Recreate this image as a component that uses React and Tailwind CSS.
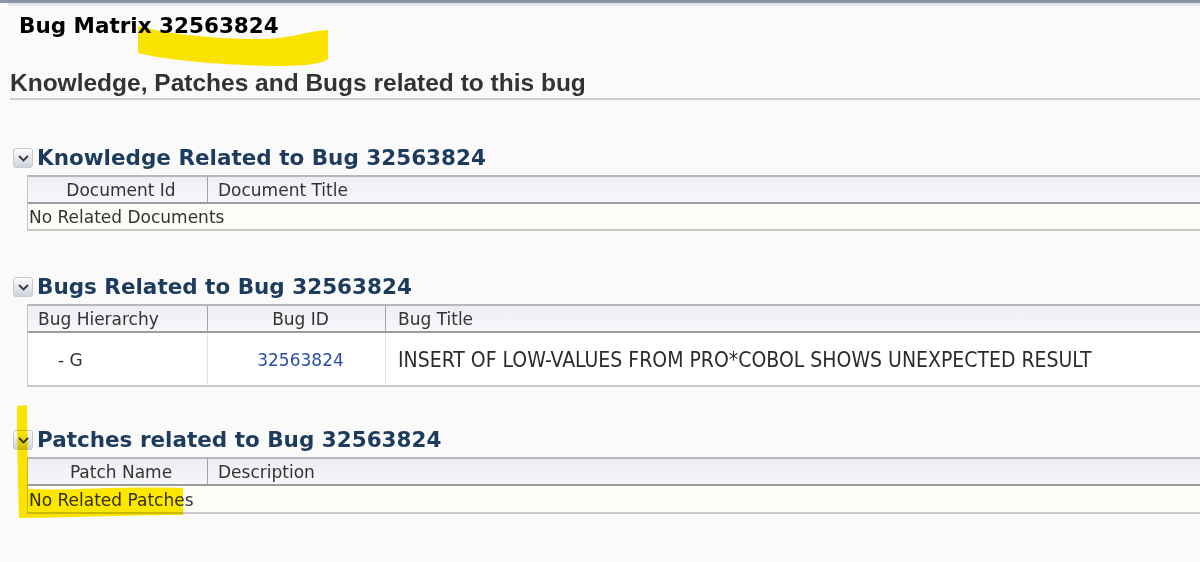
import React from "react";

const tableFont = { fontFamily: '"DejaVu Sans", Tahoma, sans-serif' };

const ToggleIcon = () => (
    <span className="flex h-[20px] w-[20px] shrink-0 items-center justify-center rounded-[3px] border border-[#c8cad2] bg-gradient-to-b from-[#fdfdfe] to-[#cfd2db]">
        <svg width="11" height="7" viewBox="0 0 11 7">
            <path d="M1 1 L5.5 5.5 L10 1" fill="none" stroke="#3a3a3a" strokeWidth="1.8" />
        </svg>
    </span>
);

const SectionHeading = ({ children }) => (
    <div className="flex items-center gap-[4px] pl-[13px]">
        <ToggleIcon />
        <h3 className="font-['DejaVu_Sans',Verdana,sans-serif] text-[21.5px] font-bold leading-[28px] text-[#1d3b5c]">
            {children}
        </h3>
    </div>
);

const HeaderCell = ({ children, className = "" }) => (
    <div className={`flex h-full items-center border-r border-[#a3a3a3] pt-[2px] ${className}`}>
        {children}
    </div>
);

const App = () => {
    return (
        <div className="relative h-[562px] overflow-hidden bg-[#fafafa] font-['DejaVu_Sans',sans-serif]">
            <div className="h-[3px] bg-[#8b95a7]" />
            <div className="ml-[8px] h-[3px] bg-[#dfe4ee]" />

            <h1 className="pl-[19px] pt-[7px] font-['DejaVu_Sans',Verdana,sans-serif] text-[21.5px] font-bold leading-[26px] text-black">
                Bug Matrix 32563824
            </h1>

            <div className="ml-[10px] mt-[30px] border-b-2 border-[#cdcdcd] pb-[1px]">
                <h2 className="font-['Liberation_Sans',Arial,sans-serif] text-[24.5px] font-bold leading-[28px] text-[#333]">
                    Knowledge, Patches and Bugs related to this bug
                </h2>
            </div>

            {/* Knowledge */}
            <div className="mt-[44px]">
                <SectionHeading>Knowledge Related to Bug 32563824</SectionHeading>
                <div className="ml-[27px] mt-[3px] border-l border-[#c4c4c4] text-[17px] text-[#333]" style={tableFont}>
                    <div className="flex h-[29px] border-y-2 border-t-[#b7b7b7] border-b-[#9c9c9c] bg-gradient-to-b from-[#eceef3] to-[#f6f7f9]">
                        <HeaderCell className="w-[180px] justify-center pl-[7px]">Document Id</HeaderCell>
                        <div className="flex items-center pl-[10px] pt-[2px]">Document Title</div>
                    </div>
                    <div className="flex h-[27px] items-center border-b-2 border-[#c9c9c9] bg-[#fdfdf8] pl-[1px] pt-[3px]">
                        No Related Documents
                    </div>
                </div>
            </div>

            {/* Bugs */}
            <div className="mt-[42px]">
                <SectionHeading>Bugs Related to Bug 32563824</SectionHeading>
                <div className="ml-[27px] mt-[3px] border-l border-[#c4c4c4] text-[17px] text-[#333]" style={tableFont}>
                    <div className="flex h-[29px] border-y-2 border-t-[#b7b7b7] border-b-[#9c9c9c] bg-gradient-to-b from-[#eceef3] to-[#f6f7f9]">
                        <HeaderCell className="w-[180px] pl-[10px]">Bug Hierarchy</HeaderCell>
                        <HeaderCell className="w-[178px] justify-center pl-[8px]">Bug ID</HeaderCell>
                        <div className="flex items-center pl-[12px] pt-[2px]">Bug Title</div>
                    </div>
                    <div className="flex h-[54px] border-b-2 border-[#c9c9c9] bg-white">
                        <div className="flex w-[180px] items-center border-r border-[#e4e4e4] pl-[30px] pt-[4px]">- G</div>
                        <div className="flex w-[178px] items-center justify-center border-r border-[#e4e4e4] pl-[8px] pt-[4px] text-[#2a4ea6]">
                            32563824
                        </div>
                        <div className="flex items-center whitespace-nowrap pl-[12px] pt-[4px] font-['DejaVu_Sans_Condensed','DejaVu_Sans',sans-serif] text-[21px] text-[#2b2b2b]">
                            INSERT OF LOW-VALUES FROM PRO*COBOL SHOWS UNEXPECTED RESULT
                        </div>
                    </div>
                </div>
            </div>

            {/* Patches */}
            <div className="mt-[39px]">
                <SectionHeading>Patches related to Bug 32563824</SectionHeading>
                <div className="ml-[27px] mt-[3px] border-l border-[#c4c4c4] text-[17px] text-[#333]" style={tableFont}>
                    <div className="flex h-[29px] border-y-2 border-t-[#b7b7b7] border-b-[#9c9c9c] bg-gradient-to-b from-[#eceef3] to-[#f6f7f9]">
                        <HeaderCell className="w-[180px] justify-center pl-[7px]">Patch Name</HeaderCell>
                        <div className="flex items-center pl-[10px] pt-[2px]">Description</div>
                    </div>
                    <div className="flex h-[28px] items-center border-b-2 border-[#c9c9c9] bg-[#fdfdf8] pl-[1px] pt-[4px]">
                        No Related Patches
                    </div>
                </div>
            </div>

            {/* highlighter marks */}
            <svg
                className="pointer-events-none absolute left-0 top-0 mix-blend-multiply"
                width="1200"
                height="562"
                viewBox="0 0 1200 562"
            >
                <path
                    d="M138 26 C160 32 200 38 250 39 C290 40 305 31 328 30 L328 59 C320 65 300 66 275 66 C230 65 175 62 138 53 Z"
                    fill="#ffe800"
                />
                <path
                    d="M17 406 L27 405 L28 489 C70 491 120 486 183 488 L183 515 C120 515 60 518 19 518 C18 480 17 440 17 406 Z"
                    fill="#ffe800"
                />
            </svg>
        </div>
    );
};

export default App;
